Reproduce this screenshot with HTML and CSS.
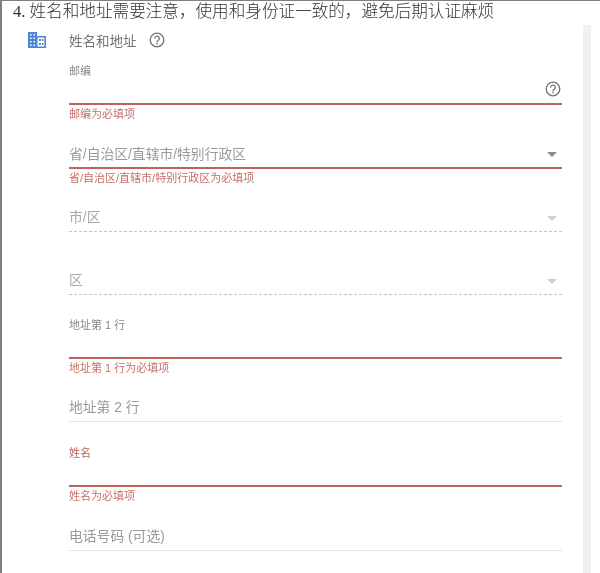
FILE: index.html
```html
<!DOCTYPE html>
<html lang="zh-CN">
<head>
    <meta charset="UTF-8">
    <meta name="viewport" content="width=device-width, initial-scale=1.0">
    <title>姓名和地址</title>
    <link rel="stylesheet" href="styles.css">
</head>
<body>
    <p class="note">4. 姓名和地址需要注意，使用和身份证一致的，避免后期认证麻烦</p>

    <div class="panel">
        <div class="panel-icon">
            <!-- building icon -->
            <svg width="18" height="16" viewBox="0 0 18 16">
                <path fill="#4a86d4" fill-rule="evenodd" d="M0 0h9v4h9v12H0z M2 2v1.500h1.500V2z M5.500 2v1.500H7V2z M2 5.500V7h1.500V5.500z M5.500 5.500V7H7V5.500z M2 9v1.500h1.500V9z M5.500 9v1.500H7V9z M2 12.500V14h1.500v-1.500z M5.500 12.500V14H7v-1.500z M9.500 5.500v9h7v-9z"/>
                <path fill="#4a86d4" d="M11 7h2v2h-2z M14 7h1.500v2H14z M11 11h2v2h-2z M14 11h1.500v2H14z"/>
            </svg>
        </div>

        <div class="form">
            <div class="form-title">
                <span>姓名和地址</span>
                <svg class="help help-title" width="16" height="16" viewBox="0 0 16 16">
                    <circle cx="8" cy="8" r="6.800" fill="none" stroke="#757575" stroke-width="1.300"/>
                    <path fill="none" stroke="#757575" stroke-width="1.300" d="M5.700 6.400a2.300 2.300 0 1 1 3.600 1.900c-.8.500-1.300.9-1.300 1.900"/>
                    <rect x="7.300" y="11" width="1.400" height="1.400" fill="#757575"/>
                </svg>
            </div>

            <div class="field">
                <div class="field-box error">
                    <label class="field-label">邮编</label>
                    <svg class="help help-field" width="16" height="16" viewBox="0 0 16 16">
                        <circle cx="8" cy="8" r="6.800" fill="none" stroke="#757575" stroke-width="1.300"/>
                        <path fill="none" stroke="#757575" stroke-width="1.300" d="M5.700 6.400a2.300 2.300 0 1 1 3.600 1.900c-.8.500-1.300.9-1.300 1.900"/>
                        <rect x="7.300" y="11" width="1.400" height="1.400" fill="#757575"/>
                    </svg>
                </div>
                <div class="field-error">邮编为必填项</div>
            </div>

            <div class="field field-short">
                <div class="field-box error select">
                    <span class="field-value">省/自治区/直辖市/特别行政区</span>
                </div>
                <div class="field-error">省/自治区/直辖市/特别行政区为必填项</div>
            </div>

            <div class="field field-short">
                <div class="field-box disabled select">
                    <span class="field-value">市/区</span>
                </div>
            </div>

            <div class="field">
                <div class="field-box disabled select">
                    <span class="field-value">区</span>
                </div>
            </div>

            <div class="field field-short">
                <div class="field-box error">
                    <label class="field-label">地址第 1 行</label>
                </div>
                <div class="field-error">地址第 1 行为必填项</div>
            </div>

            <div class="field field-tall">
                <div class="field-box">
                    <span class="field-value">地址第 2 行</span>
                </div>
            </div>

            <div class="field">
                <div class="field-box error">
                    <label class="field-label label-error">姓名</label>
                </div>
                <div class="field-error">姓名为必填项</div>
            </div>

            <div class="field field-tall">
                <div class="field-box">
                    <span class="field-value">电话号码 (可选)</span>
                </div>
            </div>
        </div>

        <div class="scrollbar"></div>
    </div>
</body>
</html>
```

FILE: styles.css
```css
* {
    box-sizing: border-box;
}

html, body {
    height: 100%;
}

body {
    margin: 0;
    background-color: #fff;
    border-top: 1px solid #808080;
    border-left: 2px solid #808080;
    font-family: "Liberation Sans", "Noto Sans CJK SC", sans-serif;
    overflow: hidden;
    filter: blur(0.3px);
}

.note {
    margin: 0;
    height: 24px;
    padding: 1px 0 0 11px;
    font-family: "Liberation Serif", "Noto Sans CJK SC", serif;
    font-size: 16.600px;
    font-weight: 300;
    line-height: 19px;
    color: #333;
    white-space: nowrap;
}

.panel {
    display: flex;
    height: 548px;
}

.panel-icon {
    width: 67px;
    padding: 7px 0 0 26px;
}

.form {
    width: 493px;
    padding-top: 5px;
}

.form-title {
    display: flex;
    align-items: center;
    height: 20px;
    margin-bottom: 7px;
    font-size: 13.500px;
    color: #757575;
}

.help-title {
    margin-left: 12px;
}

.field {
    height: 64px;
}

.field-short {
    height: 63px;
}

.field-tall {
    height: 65px;
}

.field-box {
    position: relative;
    display: flex;
    flex-direction: column;
    height: 48px;
    border-bottom: 1px solid #e4e4e4;
}

.field-box.error {
    border-bottom: 2px solid #c0625c;
}

.field-box.disabled {
    border-bottom: 1px dashed #c4c4c4;
}

.field-label {
    margin-top: 7px;
    font-size: 11px;
    line-height: 14px;
    color: #8a8a8a;
}

.label-error {
    color: #c0625c;
}

.field-value {
    margin-top: auto;
    padding-bottom: 3px;
    font-size: 13.800px;
    line-height: 20px;
    color: #9a9a9a;
}

.field-box.error .field-value {
    padding-bottom: 2px;
}

.field-box.disabled .field-value {
    color: #a8a8a8;
}

.field-error {
    padding-top: 1px;
    font-size: 11px;
    line-height: 16px;
    color: #c4706a;
}

.help-field {
    position: absolute;
    right: 1px;
    top: 24px;
}

/* dropdown arrow */
.select::after {
    content: "";
    position: absolute;
    right: 5px;
    bottom: 10px;
    border-left: 5px solid transparent;
    border-right: 5px solid transparent;
    border-top: 5px solid #8c8c8c;
}

.disabled.select::after {
    border-top-color: #d0d0d0;
}

.scrollbar {
    width: 8px;
    margin-left: 21px;
    background-color: #f1f1f1;
}
```
